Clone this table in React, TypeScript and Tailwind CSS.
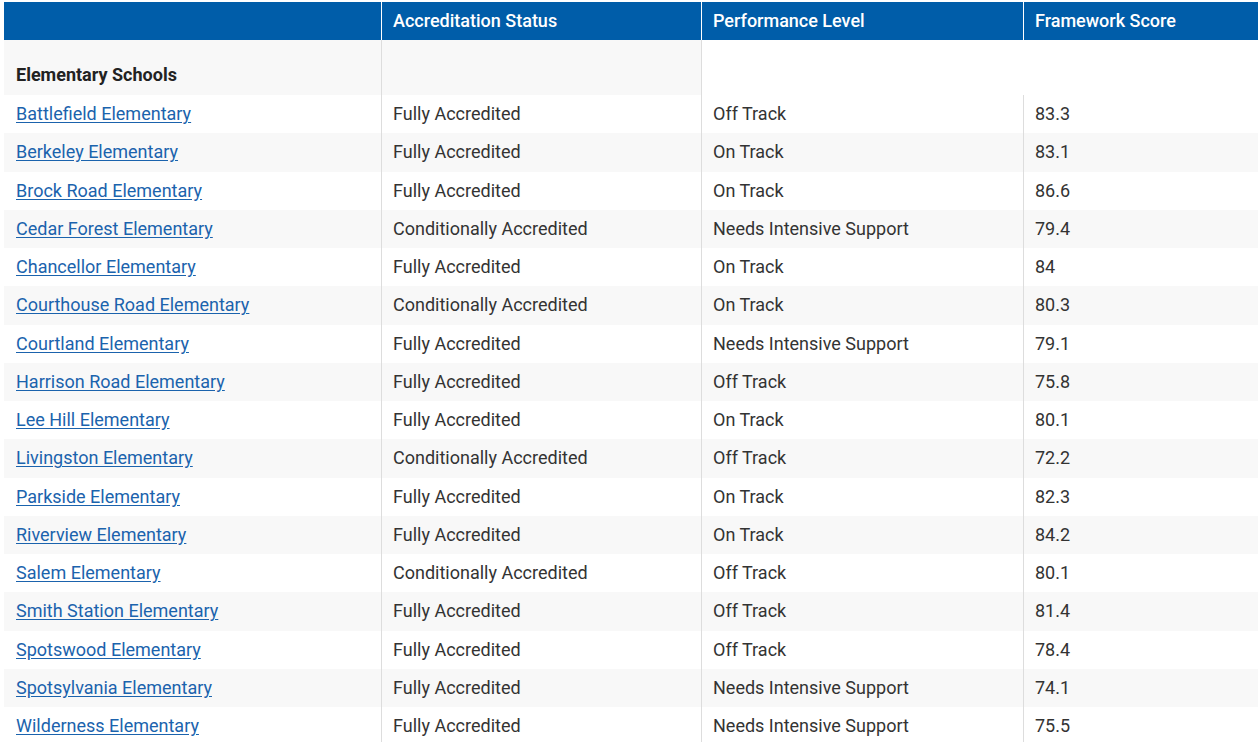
import React from "react";

const rows: [string, string, string, string][] = [
  ["Battlefield Elementary", "Fully Accredited", "Off Track", "83.3"],
  ["Berkeley Elementary", "Fully Accredited", "On Track", "83.1"],
  ["Brock Road Elementary", "Fully Accredited", "On Track", "86.6"],
  ["Cedar Forest Elementary", "Conditionally Accredited", "Needs Intensive Support", "79.4"],
  ["Chancellor Elementary", "Fully Accredited", "On Track", "84"],
  ["Courthouse Road Elementary", "Conditionally Accredited", "On Track", "80.3"],
  ["Courtland Elementary", "Fully Accredited", "Needs Intensive Support", "79.1"],
  ["Harrison Road Elementary", "Fully Accredited", "Off Track", "75.8"],
  ["Lee Hill Elementary", "Fully Accredited", "On Track", "80.1"],
  ["Livingston Elementary", "Conditionally Accredited", "Off Track", "72.2"],
  ["Parkside Elementary", "Fully Accredited", "On Track", "82.3"],
  ["Riverview Elementary", "Fully Accredited", "On Track", "84.2"],
  ["Salem Elementary", "Conditionally Accredited", "Off Track", "80.1"],
  ["Smith Station Elementary", "Fully Accredited", "Off Track", "81.4"],
  ["Spotswood Elementary", "Fully Accredited", "Off Track", "78.4"],
  ["Spotsylvania Elementary", "Fully Accredited", "Needs Intensive Support", "74.1"],
  ["Wilderness Elementary", "Fully Accredited", "Needs Intensive Support", "75.5"],
];

export default function App() {
  return (
    <div className="bg-white w-[1258px] h-[742px] overflow-hidden pt-[2px] pl-[4px] text-[#333] [font-family:Roboto,'Liberation_Sans',sans-serif] text-[18px]">
      <div className="w-[1254px]">
        <div className="grid grid-cols-[377px_320px_322px_1fr] h-[38px] bg-[#005da9] text-white font-medium">
          <div />
          <div className="border-l border-white flex items-center px-[11px] pb-[2px]">Accreditation Status</div>
          <div className="border-l border-white flex items-center px-[11px] pb-[2px]">Performance Level</div>
          <div className="border-l border-white flex items-center px-[11px] pb-[2px]">Framework Score</div>
        </div>
        <div className="grid grid-cols-[377px_320px_1fr] h-[55px]">
          <div className="bg-[#f8f8f8] flex items-end pb-[7px] px-[12px] font-bold text-[#222]">Elementary Schools</div>
          <div className="bg-[#f8f8f8] border-l border-[#dddddd]" />
          <div className="bg-white border-l border-[#dddddd]" />
        </div>
        {rows.map((r, i) => (
          <div
            key={r[0]}
            className={`grid grid-cols-[377px_320px_322px_1fr] h-[38.25px] ${i % 2 === 1 ? "bg-[#f8f8f8]" : "bg-white"}`}
          >
            <div className="flex items-center px-[12px] pb-[1px]">
              <a href="#" className="text-[#1b63ad] underline underline-offset-[2px]">{r[0]}</a>
            </div>
            <div className="border-l border-[#dddddd] flex items-center px-[11px] pb-[1px]">{r[1]}</div>
            <div className="border-l border-[#dddddd] flex items-center px-[11px] pb-[1px]">{r[2]}</div>
            <div className="border-l border-[#dddddd] flex items-center px-[11px] pb-[1px]">{r[3]}</div>
          </div>
        ))}
      </div>
    </div>
  );
}
